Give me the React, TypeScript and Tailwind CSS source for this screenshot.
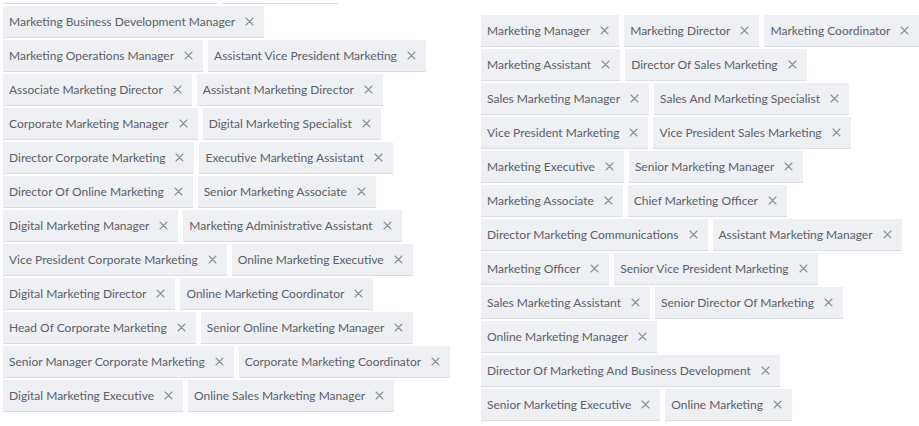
import React from 'react';

const hiddenRow = ['Director Of Marketing Operations', 'Marketing Lead'];

const leftTags = [
  'Marketing Business Development Manager',
  'Marketing Operations Manager',
  'Assistant Vice President Marketing',
  'Associate Marketing Director',
  'Assistant Marketing Director',
  'Corporate Marketing Manager',
  'Digital Marketing Specialist',
  'Director Corporate Marketing',
  'Executive Marketing Assistant',
  'Director Of Online Marketing',
  'Senior Marketing Associate',
  'Digital Marketing Manager',
  'Marketing Administrative Assistant',
  'Vice President Corporate Marketing',
  'Online Marketing Executive',
  'Digital Marketing Director',
  'Online Marketing Coordinator',
  'Head Of Corporate Marketing',
  'Senior Online Marketing Manager',
  'Senior Manager Corporate Marketing',
  'Corporate Marketing Coordinator',
  'Digital Marketing Executive',
  'Online Sales Marketing Manager',
];

const rightTags = [
  'Marketing Manager',
  'Marketing Director',
  'Marketing Coordinator',
  'Marketing Assistant',
  'Director Of Sales Marketing',
  'Sales Marketing Manager',
  'Sales And Marketing Specialist',
  'Vice President Marketing',
  'Vice President Sales Marketing',
  'Marketing Executive',
  'Senior Marketing Manager',
  'Marketing Associate',
  'Chief Marketing Officer',
  'Director Marketing Communications',
  'Assistant Marketing Manager',
  'Marketing Officer',
  'Senior Vice President Marketing',
  'Sales Marketing Assistant',
  'Senior Director Of Marketing',
  'Online Marketing Manager',
  'Director Of Marketing And Business Development',
  'Senior Marketing Executive',
  'Online Marketing',
];

function Tag({ label }: { label: string }) {
  return (
    <span className="flex h-[32px] items-center pl-[6px] pr-[10px] bg-[#eef0f3] border-b border-[#dadde2] text-[12px] text-[#5b606a] whitespace-nowrap">
      {label}
      <svg className="ml-[10px]" width="9" height="9" viewBox="0 0 9 9" fill="none">
        <path d="M1 1 L8 8 M8 1 L1 8" stroke="#8a8f97" strokeWidth="1.1" strokeLinecap="round" />
      </svg>
    </span>
  );
}

export default function App() {
  return (
    <div className="w-[919px] h-[426px] overflow-hidden bg-white flex font-['Lato',sans-serif]">
      {/* left list is scrolled, only the bottom edge of the row above shows */}
      <div className="w-[460px] shrink-0 h-full pt-[3px] pl-[3px]">
        <div className="h-full overflow-hidden">
          <div className="-mt-[31px] flex flex-wrap gap-x-[5px] gap-y-[2px]">
            {hiddenRow.map((t) => (
              <Tag key={t} label={t} />
            ))}
            {leftTags.map((t) => (
              <Tag key={t} label={t} />
            ))}
          </div>
        </div>
      </div>
      <div className="ml-[21px] w-[444px] shrink-0 pt-[15px] flex flex-wrap content-start gap-x-[5px] gap-y-[2px]">
        {rightTags.map((t) => (
          <Tag key={t} label={t} />
        ))}
      </div>
    </div>
  );
}
